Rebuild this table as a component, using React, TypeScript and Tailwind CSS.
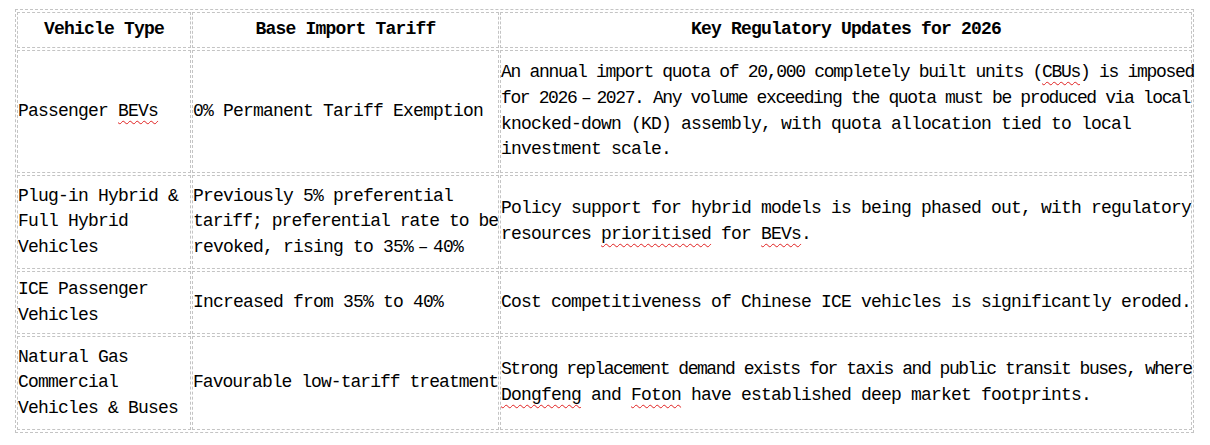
import React from "react";

const font = "font-['Liberation_Mono','Noto_Sans_Mono_CJK_SC',monospace] text-[18px] leading-[25.6px] text-black";
const cell = "border border-dashed border-[#c4c4c4] p-0 align-middle";
const sq = "underline decoration-wavy decoration-[#e02020] decoration-1 underline-offset-[4px]";

function L({ children, t = "tracking-[-0.8px]" }: { children: React.ReactNode; t?: string }) {
  return <div className={`whitespace-pre ${t}`}>{children}</div>;
}

function Dash() {
  return <span className="inline-block w-[20px] text-center tracking-normal">–</span>;
}

export default function App() {
  return (
    <div className={`bg-white w-[1210px] h-[445px] pt-[10px] pl-[15px] ${font}`}>
      <table className="table-fixed border-separate border-spacing-x-[1px] border-spacing-y-[2px] border border-dashed border-[#c4c4c4] w-[1179px] -mt-[1px]">
        <tbody>
          <tr>
            <td className={`${cell} w-[174px] h-[36px] text-center font-bold tracking-[-0.8px]`}>Vehicle Type</td>
            <td className={`${cell} w-[307px] text-center font-bold tracking-[-0.8px]`}>Base Import Tariff</td>
            <td className={`${cell} text-center font-bold tracking-[-0.8px]`}>Key Regulatory Updates for 2026</td>
          </tr>
          <tr>
            <td className={`${cell} h-[123px]`}>
              <L>Passenger <span className={sq}>BEVs</span></L>
            </td>
            <td className={cell}>
              <L>0% Permanent Tariff Exemption</L>
            </td>
            <td className={cell}>
              <L t="tracking-[-1.31px]">An annual import quota of 20,000 completely built units (<span className={sq}>CBUs</span>) is imposed</L>
              <L t="tracking-[-1.38px]">for 2026<Dash />2027. Any volume exceeding the quota must be produced via local</L>
              <L>knocked-down (KD) assembly, with quota allocation tied to local</L>
              <L>investment scale.</L>
            </td>
          </tr>
          <tr>
            <td className={`${cell} h-[94px]`}>
              <L>Plug-in Hybrid &amp;</L>
              <L>Full Hybrid</L>
              <L>Vehicles</L>
            </td>
            <td className={cell}>
              <L>Previously 5% preferential</L>
              <L t="tracking-[-0.96px]">tariff; preferential rate to be</L>
              <L>revoked, rising to 35%<Dash />40%</L>
            </td>
            <td className={cell}>
              <L>Policy support for hybrid models is being phased out, with regulatory</L>
              <L>resources <span className={sq}>prioritised</span> for <span className={sq}>BEVs</span>.</L>
            </td>
          </tr>
          <tr>
            <td className={`${cell} h-[63px]`}>
              <L>ICE Passenger</L>
              <L>Vehicles</L>
            </td>
            <td className={cell}>
              <L>Increased from 35% to 40%</L>
            </td>
            <td className={cell}>
              <L>Cost competitiveness of Chinese ICE vehicles is significantly eroded.</L>
            </td>
          </tr>
          <tr>
            <td className={`${cell} h-[94px]`}>
              <L>Natural Gas</L>
              <L>Commercial</L>
              <L>Vehicles &amp; Buses</L>
            </td>
            <td className={cell}>
              <L t="tracking-[-0.96px]">Favourable low-tariff treatment</L>
            </td>
            <td className={cell}>
              <L t="tracking-[-1.47px]">Strong replacement demand exists for taxis and public transit buses, where</L>
              <L><span className={sq}>Dongfeng</span> and <span className={sq}>Foton</span> have established deep market footprints.</L>
            </td>
          </tr>
        </tbody>
      </table>
    </div>
  );
}
